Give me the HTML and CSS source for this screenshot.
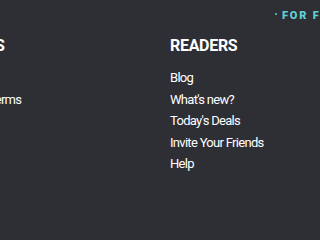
FILE: index.html
```html
<!DOCTYPE html>
<html>
<head>
<meta charset="utf-8">
<link rel="stylesheet" href="styles.css">
</head>
<body>
<div class="page">
  <div class="topbar">
    <span class="promo"><span class="dot"></span>FOR FREE TRIAL</span>
  </div>
  <div class="columns">
    <div class="col">
      <h3 class="head">WRITERS</h3>
      <ul class="links">
        <li>About</li>
        <li>Privacy &amp; Terms</li>
      </ul>
    </div>
    <div class="col">
      <h3 class="head">READERS</h3>
      <ul class="links">
        <li>Blog</li>
        <li>What's new?</li>
        <li>Today's Deals</li>
        <li>Invite Your Friends</li>
        <li>Help</li>
      </ul>
    </div>
  </div>
</div>
</body>
</html>
```
FILE: styles.css
```css
html, body {
  margin: 0;
  padding: 0;
  background: #2e2e35;
  overflow: hidden;
}
.page {
  width: 320px;
  height: 214px;
  overflow: hidden;
  font-family: Roboto, "Liberation Sans", sans-serif;
  color: #ffffff;
}
.topbar {
  height: 28px;
  padding-left: 275px;
  white-space: nowrap;
  overflow: hidden;
}
.promo {
  display: inline-flex;
  align-items: flex-start;
  margin-top: 10px;
  font-size: 11px;
  font-weight: 900;
  letter-spacing: 1.8px;
  color: #5fd0d3;
  line-height: 12px;
}
.dot {
  width: 2px;
  height: 2px;
  margin-top: 3px;
  margin-right: 5px;
  border-radius: 1px;
  background: #5fd0d3;
}
.columns {
  display: grid;
  grid-template-columns: 231px 240px;
  margin-left: -61px;
}
.head {
  margin: 8px 0 0 0;
  font-size: 16px;
  font-weight: 700;
  line-height: 20px;
  letter-spacing: -0.3px;
}
.links {
  list-style: none;
  margin: 11px 0 0 0;
  padding: 0;
  font-size: 13px;
  line-height: 21.5px;
  letter-spacing: -0.7px;
  white-space: nowrap;
}
```
